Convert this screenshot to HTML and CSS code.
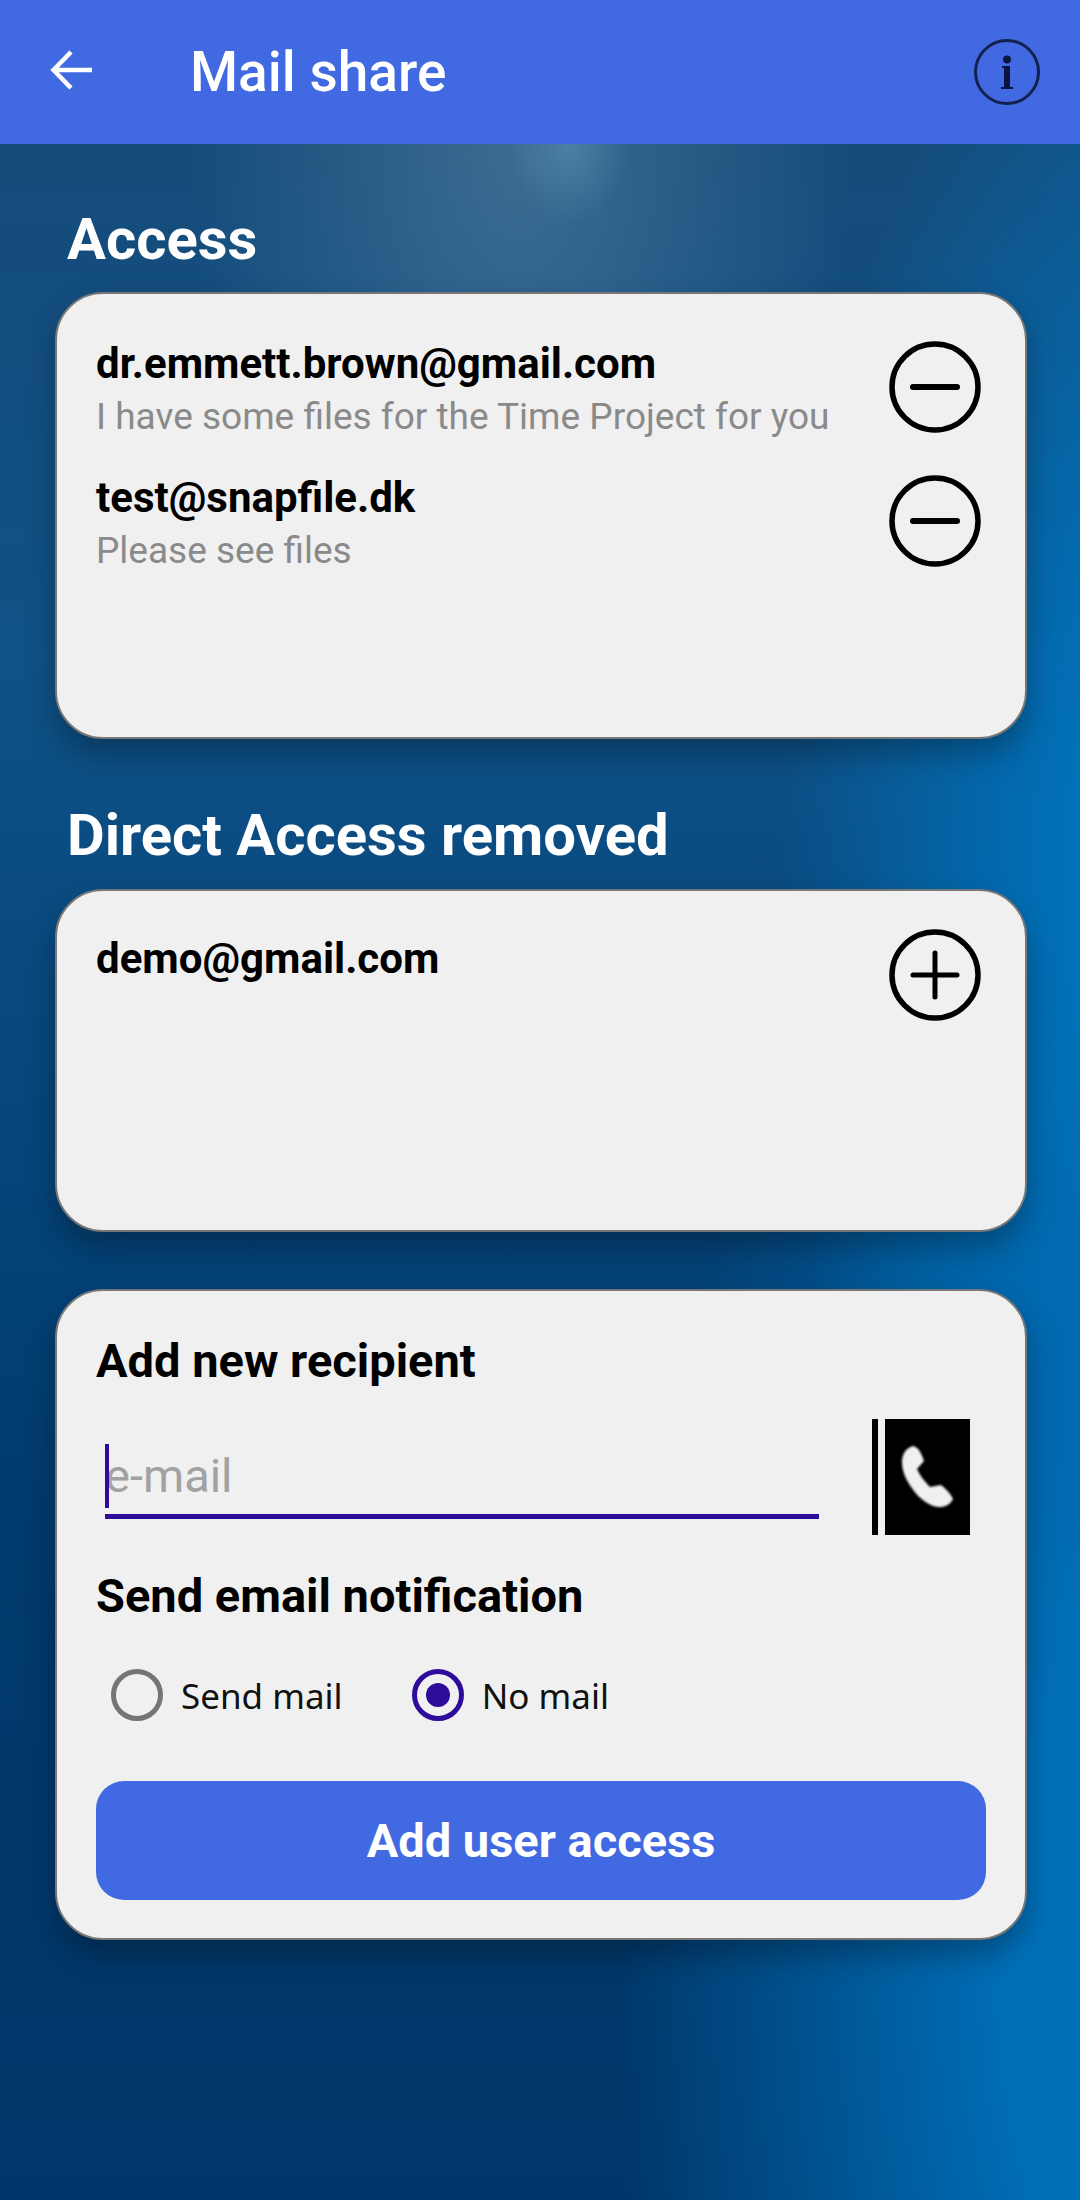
FILE: index.html
```html
<!DOCTYPE html>
<html lang="en">
<head>
  <meta charset="UTF-8" />
  <title>Mail share</title>
  <link rel="stylesheet" href="styles.css">
</head>
<body>
  <header class="topbar">
    <svg class="back" viewBox="0 0 44 44"><path d="M42 22H4M21 4 3.500 22 21 40" fill="none" stroke="#fff" stroke-width="4.500"/></svg>
    <h1>Mail share</h1>
    <svg class="info" viewBox="0 0 66 66">
      <circle cx="33" cy="33" r="31.500" fill="none" stroke="#14204f" stroke-width="3"/>
      <circle cx="33" cy="20.500" r="4" fill="#0c1440"/>
      <path d="M28 27h8v21h3v2H27v-2h3V29h-2z" fill="#0c1440"/>
    </svg>
  </header>

  <main class="main">
    <h2 class="section-title first">Access</h2>
    <section class="card card-access">
      <div class="row">
        <div class="row-text">
          <div class="mail">dr.emmett.brown@gmail.com</div>
          <div class="note">I have some files for the Time Project for you</div>
        </div>
        <svg class="round-btn" viewBox="0 0 92 92"><circle cx="46" cy="46" r="43" fill="none" stroke="#000" stroke-width="5.500"/><path d="M24 46h44" stroke="#000" stroke-width="6" stroke-linecap="round"/></svg>
      </div>
      <div class="row">
        <div class="row-text">
          <div class="mail">test@snapfile.dk</div>
          <div class="note">Please see files</div>
        </div>
        <svg class="round-btn" viewBox="0 0 92 92"><circle cx="46" cy="46" r="43" fill="none" stroke="#000" stroke-width="5.500"/><path d="M24 46h44" stroke="#000" stroke-width="6" stroke-linecap="round"/></svg>
      </div>
    </section>

    <h2 class="section-title">Direct Access removed</h2>
    <section class="card card-removed">
      <div class="row">
        <div class="row-text">
          <div class="mail">demo@gmail.com</div>
        </div>
        <svg class="round-btn" viewBox="0 0 92 92"><circle cx="46" cy="46" r="43" fill="none" stroke="#000" stroke-width="5.500"/><path d="M24 46h44M46 24v44" stroke="#000" stroke-width="5" stroke-linecap="round"/></svg>
      </div>
    </section>

    <section class="card card-add">
      <h3 class="form-title">Add new recipient</h3>
      <div class="input-row">
        <div class="email-input"><span class="caret"></span><span class="placeholder">e-mail</span></div>
        <svg class="contacts" viewBox="0 0 98 116">
          <path d="M0 0h6v116H0zM13 0h85v116H13z" fill="#000"/>
          <path class="phone" d="M41 27C47 28 50 36 52 42L45 50C48 57 53 63 58 68L69 66C74 70 79 75 81 80C78 86 73 88 68 88C58 88 48 80 42 72C35 63 30 53 30 43C30 35 34 29 41 27z" fill="#f0f0f0"/>
        </svg>
      </div>
      <h3 class="form-title notify">Send email notification</h3>
      <div class="radios">
        <label class="radio"><span class="dot"></span>Send mail</label>
        <label class="radio checked"><span class="dot"></span>No mail</label>
      </div>
      <button class="add-btn">Add user access</button>
    </section>
  </main>
</body>
</html>
```

FILE: styles.css
```css
*,*::before,*::after{box-sizing:border-box;margin:0;padding:0}
html,body{height:2200px}
body{
  font-family:Roboto,"Liberation Sans",sans-serif;
  overflow:hidden;
  background:
    radial-gradient(ellipse 60px 80px at 570px 144px,rgba(110,165,195,.4),rgba(110,165,195,0)),
    radial-gradient(ellipse 330px 560px at 520px 144px,rgba(130,165,190,.36),rgba(130,165,190,0)),
    radial-gradient(ellipse 560px 1300px at 1180px 1950px,#006fb8 30%,rgba(0,112,184,0)),
    radial-gradient(ellipse 400px 1000px at 1180px 900px,#0072bb 25%,rgba(0,112,184,0)),
    linear-gradient(180deg,#174a76 0,#0f5287 30%,#05467c 50%,#013a6c 70%,#00376a 100%);
}
/* top bar */
.topbar{height:144px;background:#4169e1;display:flex;align-items:center;position:relative}
.back{width:44px;height:44px;margin:0 0 4px 50px}
.topbar h1{font-size:55px;font-weight:500;color:#fff;margin-left:96px;flex:1}
.info{width:66px;height:66px;margin-right:40px}
/* sections */
.main{padding:0 53px 0 55px}
.section-title{font-size:58px;font-weight:700;color:#fff;line-height:60px;margin:0 0 0 12px;height:60px}
.section-title.first{margin-top:65px;margin-bottom:23px}
.section-title:not(.first){margin-top:66px;margin-bottom:24px}
.card{background:#f0f0f0;border:2px solid #777;border-radius:48px;box-shadow:0 16px 30px rgba(0,0,0,.28)}
.card-access{height:447px;padding:46px 44px 0 39px}
.card-removed{height:343px;padding:44px 44px 0 39px;margin-bottom:57px}
.card-add{height:651px;padding:44px 38px 0 39px}
/* rows */
.row{display:flex;justify-content:space-between;align-items:flex-start;height:134px}
.mail{font-size:42px;font-weight:700;color:#000;line-height:48px}
.note{font-size:37px;color:#8a8a8a;line-height:44px;margin-top:7px}
.round-btn{width:92px;height:92px}
.card-access .round-btn{margin-top:1px}
.card-removed .round-btn{margin-top:-6px}
/* add form */
.form-title{font-size:47px;font-weight:700;color:#000;line-height:52px}
.input-row{display:flex;align-items:flex-start;margin-top:32px}
.email-input{width:714px;height:100px;margin:0 0 0 9px;border-bottom:5px solid #2d0c9c;position:relative;padding-top:27px;font-size:47px;line-height:60px;color:#a2a2a2}
.caret{position:absolute;left:0;top:25px;width:4px;height:64px;background:#2d0c9c}
.contacts{width:98px;height:116px;margin-left:53px}
.phone{filter:blur(.8px)}
.notify{margin-top:35px}
.radios{display:flex;margin-top:41px;margin-left:15px;font-family:"Noto Sans",sans-serif;font-size:35px;color:#111}
.radio{display:flex;align-items:center;height:64px}
.radio + .radio{margin-left:69px}
.dot{width:52px;height:52px;border:5px solid #757575;border-radius:50%;margin-right:18px;position:relative}
.checked .dot{border-color:#2d0c9c}
.checked .dot::after{content:"";position:absolute;left:9px;top:9px;width:24px;height:24px;background:#2d0c9c;border-radius:50%}
.add-btn{display:block;width:890px;height:119px;margin-top:54px;background:#4169e1;border:none;border-radius:28px;color:#fff;font-family:Roboto,sans-serif;font-size:47px;font-weight:700}
```
